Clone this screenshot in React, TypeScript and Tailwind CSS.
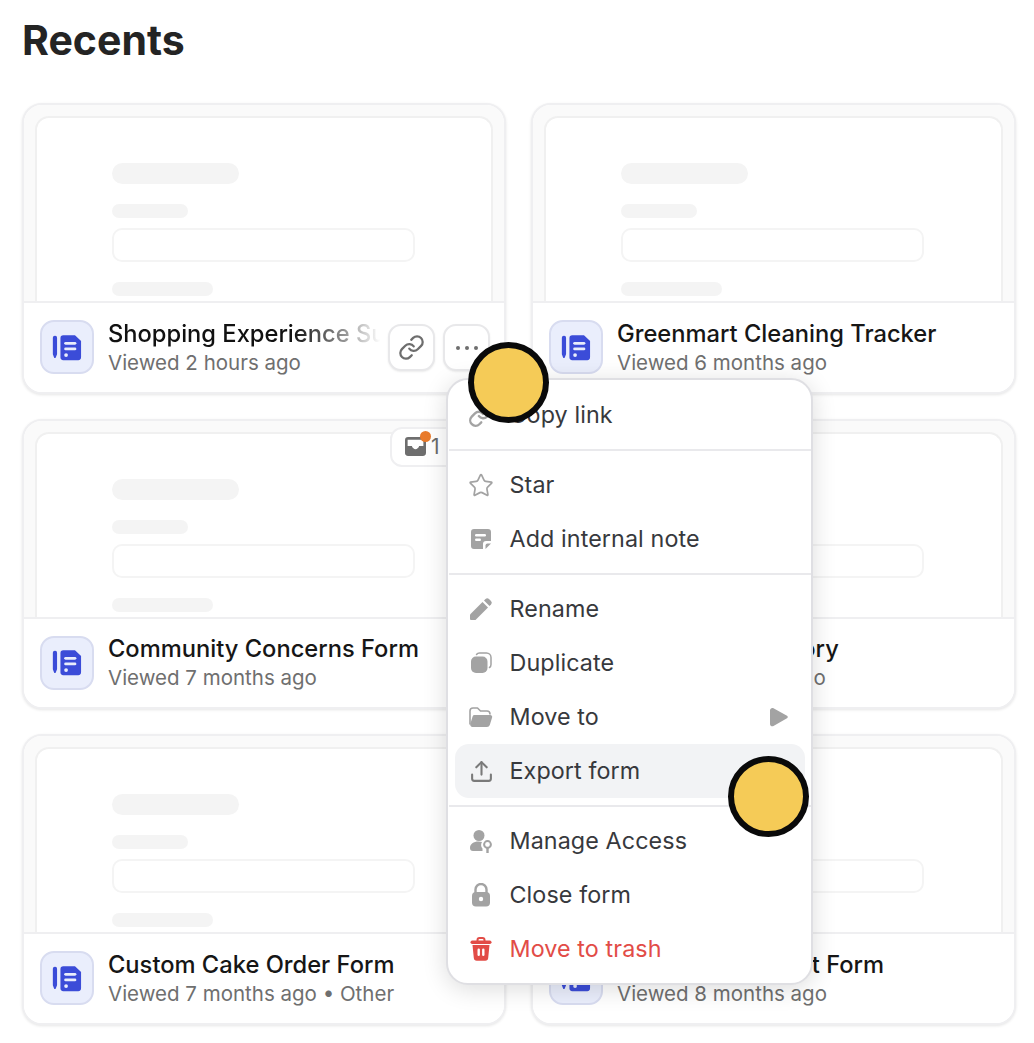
import React from 'react';
import { Link, Star, Upload } from 'lucide-react';

const cards = [
  { title: 'Shopping Experience Survey', sub: 'Viewed 2 hours ago', hover: true },
  { title: 'Greenmart Cleaning Tracker', sub: 'Viewed 6 months ago' },
  { title: 'Community Concerns Form', sub: 'Viewed 7 months ago', badge: true },
  { title: 'Employee Directory', sub: 'Viewed 7 months ago' },
  { title: 'Custom Cake Order Form', sub: 'Viewed 7 months ago • Other' },
  { title: 'Equipment Report Form', sub: 'Viewed 8 months ago' },
];

function FormIcon() {
  return (
    <svg width="30" height="27" viewBox="0 0 32 28">
      <path d="M3 1.500a2.200 2.200 0 0 1 2.400 2.200v17.600L4 24.600a1 1 0 0 1-1.800 0L.9 21.300V3.700A2.200 2.200 0 0 1 3 1.500z" fill="#3b4cd8" />
      <path d="M12 1h12.500L31 7v17.500a3 3 0 0 1-3 3H12a3 3 0 0 1-3-3V4a3 3 0 0 1 3-3z" fill="#3b4cd8" />
      <rect x="13" y="8" width="13" height="3" rx="1.500" fill="#e9edfc" />
      <rect x="13" y="14" width="13" height="3" rx="1.500" fill="#e9edfc" />
      <circle cx="15" cy="22" r="2" fill="#e9edfc" />
    </svg>
  );
}

function Preview() {
  return (
    <div className="h-[196px] bg-[#fafafa] px-[11px] pt-[11px] overflow-hidden">
      <div className="h-full bg-white border-2 border-b-0 border-[#f0f0f0] rounded-t-[14px] pl-[75px] pt-[45px]">
        <div className="w-[127px] h-[21px] rounded-full bg-[#f4f4f4]" />
        <div className="w-[76px] h-[14px] rounded-full bg-[#f4f4f4] mt-[20px]" />
        <div className="w-[303px] h-[34px] rounded-[10px] border-2 border-[#f4f4f4] mt-[10px]" />
        <div className="w-[101px] h-[14px] rounded-full bg-[#f4f4f4] mt-[20px]" />
      </div>
    </div>
  );
}

function Card({ title, sub, hover, badge }: { title: string; sub: string; hover?: boolean; badge?: boolean }) {
  return (
    <div className="relative h-[290.5px] rounded-[20px] border-2 border-[#efeff1] bg-white overflow-hidden shadow-[0_1px_3px_rgba(0,0,0,0.1)]">
      <Preview />
      {badge && (
        <div className="absolute left-[366px] top-[6px] h-[40px] w-[80px] flex items-center gap-[4px] pl-[13px] rounded-[12px] border-2 border-[#efeff1] bg-white">
          <span className="relative">
            <svg width="21" height="19" viewBox="0 0 20 18">
              <path d="M3 0h14a3 3 0 0 1 3 3v12a3 3 0 0 1-3 3H3a3 3 0 0 1-3-3V3a3 3 0 0 1 3-3z" fill="#6e6e6e" />
              <path d="M2.500 2.500h15v6h-4c-.8 2-2 3-3.500 3s-2.700-1-3.500-3h-4z" fill="#fff" />
            </svg>
            <span className="absolute -top-[6px] right-[-5px] w-[11px] h-[11px] rounded-full bg-[#e97b2c]" />
          </span>
          <span className="text-[21px] leading-none text-[#6b6b6b] ml-[1px]">1</span>
        </div>
      )}
      <div className="relative h-[90.5px] border-t-2 border-[#efeff1] bg-white flex items-center pl-[16px]">
        <div className="w-[54px] h-[54px] shrink-0 rounded-[14px] bg-[#eaeefc] border-2 border-[#d8dcf0] flex items-center justify-center">
          <FormIcon />
        </div>
        <div className="ml-[14px] min-w-0">
          {hover ? (
            <div className="w-[278px] overflow-hidden whitespace-nowrap text-[23.7px] leading-[30px] font-medium text-transparent bg-linear-to-r from-[#111] from-[66%] to-[#ffffff] to-[98%] bg-clip-text">
              {title}
            </div>
          ) : (
            <div className="whitespace-nowrap text-[23.7px] leading-[30px] font-medium text-[#161616]">{title}</div>
          )}
          <div className="whitespace-nowrap text-[20.5px] leading-[27px] text-[#6f6f6f]">{sub}</div>
        </div>
        {hover && (
          <div className="absolute right-[14px] top-[21px] flex gap-[8px]">
            <div className="w-[47px] h-[47px] rounded-[13px] bg-white border-2 border-[#e8e8ea] shadow-[0_1px_2px_rgba(0,0,0,0.08)] flex items-center justify-center">
              <Link size={27} color="#6e6e6e" strokeWidth={2} />
            </div>
            <div className="w-[47px] h-[47px] rounded-[13px] bg-white border-2 border-[#e8e8ea] shadow-[0_1px_2px_rgba(0,0,0,0.08)] flex items-center justify-center gap-[5px]">
              <span className="w-[4px] h-[4px] rounded-full bg-[#6e6e6e]" />
              <span className="w-[4px] h-[4px] rounded-full bg-[#6e6e6e]" />
              <span className="w-[4px] h-[4px] rounded-full bg-[#6e6e6e]" />
            </div>
          </div>
        )}
      </div>
    </div>
  );
}

const G = '#a3a3a3';

const icons: Record<string, React.ReactNode> = {
  copy: <Link size={26} color={G} strokeWidth={2.2} />,
  star: <Star size={27} color={G} strokeWidth={1.6} />,
  note: (
    <svg width="22" height="22" viewBox="0 0 22 22">
      <path d="M4 1h14a3 3 0 0 1 3 3v9h-5a3 3 0 0 0-3 3v5H4a3 3 0 0 1-3-3V4a3 3 0 0 1 3-3z" fill={G} />
      <rect x="5" y="6" width="11" height="2.400" rx="1.200" fill="#fff" />
      <rect x="5" y="10.500" width="6" height="2.400" rx="1.200" fill="#fff" />
      <path d="M15.500 21v-3.500a2 2 0 0 1 2-2H21z" fill={G} />
    </svg>
  ),
  rename: (
    <svg width="24" height="24" viewBox="0 0 24 24">
      <path d="M1 17.500 13.500 5l5.500 5.500L6.500 23H2a1 1 0 0 1-1-1z" fill={G} />
      <path d="m15 3.500 1.500-1.500a2.500 2.500 0 0 1 3.500 0l2 2a2.500 2.500 0 0 1 0 3.500L20.500 9z" fill={G} />
    </svg>
  ),
  duplicate: (
    <svg width="22" height="22" viewBox="0 0 22 22">
      <rect x="1" y="4.500" width="16.500" height="16.500" rx="5" fill={G} />
      <path d="M6.500 2.500c.5-.7 1.400-1.500 3-1.500h7a4.500 4.500 0 0 1 4.500 4.500v7c0 1.500-.7 2.500-1.500 3" fill="none" stroke={G} strokeWidth="1.500" strokeLinecap="round" />
    </svg>
  ),
  move: (
    <svg width="24" height="21" viewBox="0 0 24 21">
      <path d="M1 17V4a3 3 0 0 1 3-3h4.500l3 3H18a3 3 0 0 1 3 3" fill="none" stroke={G} strokeWidth="1.600" strokeLinecap="round" strokeLinejoin="round" />
      <path d="M5.500 8h15.700a2 2 0 0 1 1.900 2.600l-2.300 7.500A3 3 0 0 1 18 20H3.500a2.300 2.300 0 0 1-2.200-3l2.300-7.600A2 2 0 0 1 5.500 8z" fill={G} />
    </svg>
  ),
  export: <Upload size={25} color="#7a7a7a" strokeWidth={2} />,
  access: (
    <svg width="24" height="24" viewBox="0 0 24 24">
      <circle cx="10" cy="6.500" r="5.500" fill={G} />
      <path d="M1 19c0-4 3.500-6.500 8.500-6.500 1.500 0 2.500.2 3.500.5-.6 1-.9 2-.9 3 0 1.500.6 2.700 1.400 3.600V22H4c-2 0-3-1.200-3-3z" fill={G} />
      <circle cx="18.500" cy="15.500" r="3.400" fill="none" stroke={G} strokeWidth="2" />
      <path d="M18.500 19v5" stroke={G} strokeWidth="2.400" strokeLinecap="round" />
    </svg>
  ),
  lock: (
    <svg width="20" height="24" viewBox="0 0 20 24">
      <path d="M4.500 10V6.500a5.500 5.500 0 0 1 11 0V10" fill="none" stroke={G} strokeWidth="2.400" />
      <rect x="1" y="9" width="18" height="14.500" rx="4" fill={G} />
      <circle cx="10" cy="16" r="2.200" fill="#fff" />
    </svg>
  ),
  trash: (
    <svg width="22" height="24" viewBox="0 0 22 24">
      <path d="M7.500 4V3a2 2 0 0 1 2-2h3a2 2 0 0 1 2 2v1" fill="none" stroke="#e24c47" strokeWidth="2" />
      <rect x="0.500" y="3.500" width="21" height="3.500" rx="1.700" fill="#e24c47" />
      <path d="M2.500 8h17l-1.300 13a3 3 0 0 1-3 2.700H6.800a3 3 0 0 1-3-2.700z" fill="#e24c47" />
      <rect x="7.500" y="11.500" width="2.400" height="7.500" rx="1.200" fill="#fff" />
      <rect x="12.100" y="11.500" width="2.400" height="7.500" rx="1.200" fill="#fff" />
    </svg>
  ),
};

function MenuItem({ icon, label, active, danger, arrow }: { icon: string; label: string; active?: boolean; danger?: boolean; arrow?: boolean }) {
  return (
    <div className={`h-[54px] mx-[6px] pl-[13px] pr-[16px] rounded-[14px] flex items-center ${active ? 'bg-[#f2f3f5]' : ''}`}>
      <span className="w-[26px] flex items-center justify-center shrink-0">{icons[icon]}</span>
      <span className={`ml-[15.5px] text-[23.3px] tracking-[0.1px] ${danger ? 'text-[#e24c47]' : 'text-[#37393d]'}`}>{label}</span>
      {arrow && (
        <svg className="ml-auto" width="20" height="20" viewBox="0 0 20 20">
          <path d="M1 3.200c0-1.800 2-2.900 3.500-2l13.500 7.500c1 .6 1 2 0 2.600L4.500 19c-1.500.9-3.500-.2-3.500-2z" fill={G} />
        </svg>
      )}
    </div>
  );
}

function Divider() {
  return <div className="h-[2px] bg-[#e9e9ec] my-[7px]" />;
}

function Menu() {
  return (
    <div className="absolute left-[446px] top-[378px] w-[367px] h-[607px] rounded-[22px] bg-white border-2 border-[#dfdfe3] py-[8px] pl-[1px] shadow-[0_4px_24px_rgba(0,0,0,0.14)]">
      <MenuItem icon="copy" label="Copy link" />
      <Divider />
      <MenuItem icon="star" label="Star" />
      <MenuItem icon="note" label="Add internal note" />
      <Divider />
      <MenuItem icon="rename" label="Rename" />
      <MenuItem icon="duplicate" label="Duplicate" />
      <MenuItem icon="move" label="Move to" arrow />
      <MenuItem icon="export" label="Export form" active />
      <Divider />
      <MenuItem icon="access" label="Manage Access" />
      <MenuItem icon="lock" label="Close form" />
      <MenuItem icon="trash" label="Move to trash" danger />
    </div>
  );
}

export default function App() {
  return (
    <div className="relative min-h-[1043px] bg-white font-['Inter',sans-serif] pl-[22px] pr-[18px]">
      <h1 className="pt-[16px] h-[103px] text-[41px] leading-[48px] font-bold text-[#242424]">Recents</h1>
      <div className="grid grid-cols-[484px_485px] gap-x-[25px] gap-y-[25px]">
        {cards.map((c) => (
          <Card key={c.title} {...c} />
        ))}
      </div>
      <Menu />
      <div className="absolute left-[468px] top-[342px] w-[81px] h-[81px] rounded-full bg-[#f5cb57] border-[6px] border-[#0a0a0a]" />
      <div className="absolute left-[728px] top-[756px] w-[81px] h-[81px] rounded-full bg-[#f5cb57] border-[6px] border-[#0a0a0a]" />
    </div>
  );
}
